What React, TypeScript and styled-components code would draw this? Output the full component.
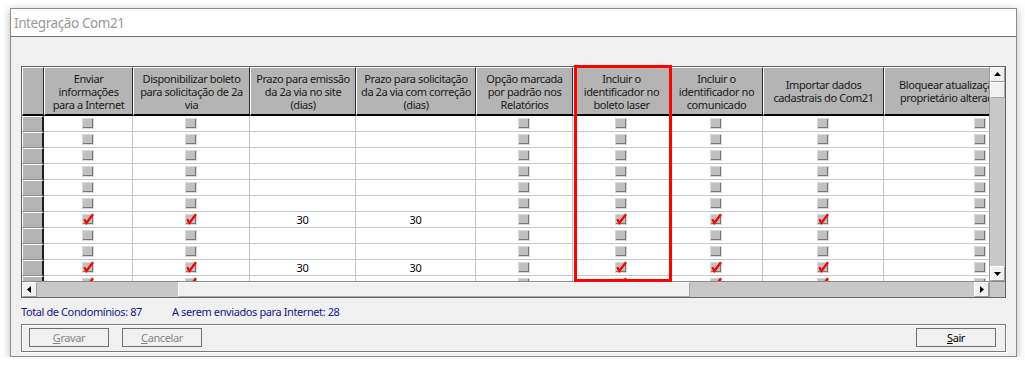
import React from "react";
import styled, {createGlobalStyle} from "styled-components";

type Column = {
  width: number;
  kind: "check" | "number";
  label: string[];
};

const columns: Column[] = [
  {width: 89, kind: "check", label: ["Enviar", "informações", "para a Internet"]},
  {width: 117, kind: "check", label: ["Disponibilizar boleto", "para solicitação de 2a", "via"]},
  {width: 106, kind: "number", label: ["Prazo para emissão", "da 2a via no site", "(dias)"]},
  {width: 120, kind: "number", label: ["Prazo para solicitação", "da 2a via com correção", "(dias)"]},
  {width: 97, kind: "check", label: ["Opção marcada", "por padrão nos", "Relatórios"]},
  {width: 97, kind: "check", label: ["Incluir o", "identificador no", "boleto laser"]},
  {width: 93, kind: "check", label: ["Incluir o", "identificador no", "comunicado"]},
  {width: 121, kind: "check", label: ["Importar dados", "cadastrais do Com21"]},
  {width: 192, kind: "check", label: ["Bloquear atualização de dados do", "proprietário alterado pelo Com21"]},
];

// columns that get a tick on the "sent" rows
const tickedColumns = [0, 1, 5, 6, 7];
const sentRows = [6, 9, 10];
const daysRows = [6, 9];
const rowCount = 12;

const CheckMark = () => (
  <Tick viewBox="0 0 12 12" width="12" height="12">
    <path d="M2.3 6.2 L4.4 10 L11 1.2" fill="none" stroke="#f00" strokeWidth="2.3"/>
  </Tick>
);

const Check: React.FC<{checked?: boolean}> = ({checked = false}) => (
  <CheckBox>
    <CheckInner/>
    {checked && <CheckMark/>}
  </CheckBox>
);

const Arrow: React.FC<{dir: "up" | "down" | "left" | "right"}> = ({dir}) => {
  const points = {
    up: "1,6 8,6 4.5,2",
    down: "1,3 8,3 4.5,7",
    left: "6,1 6,8 2,4.5",
    right: "3,1 3,8 7,4.5",
  }[dir];
  return (
    <ArrowButton>
      <svg width="9" height="9" viewBox="0 0 9 9">
        <polygon points={points} fill="#000"/>
      </svg>
    </ArrowButton>
  );
};

const App = () => {
  const template = `22px ${columns.map((c) => c.width + "px").join(" ")}`;
  return (
    <>
      <GlobalStyle/>
      <Window>
        <TitleBar>Integração Com21</TitleBar>
        <Client>
          <GridFrame>
            <Viewport>
              <Table $template={template}>
                <HeaderCell/>
                {columns.map((col, i) => (
                  <HeaderCell key={i}>
                    {col.label.map((line, j) => (
                      <span key={j}>{line}</span>
                    ))}
                  </HeaderCell>
                ))}
                {Array.from({length: rowCount}).map((_, r) => {
                  const sent = sentRows.includes(r);
                  return (
                    <React.Fragment key={r}>
                      <RowHeader/>
                      {columns.map((col, c) => (
                        <Cell key={c}>
                          {col.kind === "check" ? (
                            <Check checked={sent && tickedColumns.includes(c)}/>
                          ) : (
                            daysRows.includes(r) && "30"
                          )}
                        </Cell>
                      ))}
                    </React.Fragment>
                  );
                })}
              </Table>
            </Viewport>
            <VScroll>
              <Arrow dir="up"/>
              <VTrack>
                <Thumb $length={16} $vertical/>
              </VTrack>
              <Arrow dir="down"/>
            </VScroll>
            <HScroll>
              <Arrow dir="left"/>
              <HTrack $offset={141}>
                <Thumb $length={512}/>
              </HTrack>
              <Arrow dir="right"/>
            </HScroll>
            <ScrollCorner/>
            <Highlight/>
          </GridFrame>
          <Status>
            <span>Total de Condomínios: 87</span>
            <span>A serem enviados para Internet: 28</span>
          </Status>
          <ButtonPanel>
            <Button disabled><u>G</u>ravar</Button>
            <Button disabled><u>C</u>ancelar</Button>
            <Button $push><u>S</u>air</Button>
          </ButtonPanel>
        </Client>
      </Window>
    </>
  );
};

const GlobalStyle = createGlobalStyle`
  html, body {
    margin: 0;
    padding: 0;
    background: #fff;
  }
  body {
    font-family: "Noto Sans", "Segoe UI", sans-serif;
    font-size: 11px;
    letter-spacing: -0.4px;
    color: #000;
  }
`;

const Window = styled.div`
  box-sizing: border-box;
  width: 1007px;
  margin: 8px 0 0 10px;
  border: 1px solid #8c8c8c;
  box-shadow: 0 2px 9px rgba(0, 0, 0, 0.28);
  background: #fff;
`;

const TitleBar = styled.div`
  height: 27px;
  display: flex;
  align-items: center;
  padding-left: 3px;
  font-size: 13.5px;
  letter-spacing: -0.4px;
  color: #999;
  background: #fff;
`;

const Client = styled.div`
  display: flex;
  flex-direction: column;
  border-top: 1px solid #6e6e6e;
  background: #f0f0f0;
  padding: 29px 10px 4px 10px;
`;

const GridFrame = styled.div`
  position: relative;
  display: grid;
  grid-template-columns: 1fr 16px;
  grid-template-rows: 214px 16px;
  border: 1px solid #646464;
  background: #fff;
`;

const Viewport = styled.div`
  overflow: hidden;
`;

const Table = styled.div<{$template: string}>`
  display: grid;
  grid-template-columns: ${({$template}) => $template};
  grid-template-rows: 49px;
  grid-auto-rows: 16px;
  width: max-content;
`;

const HeaderCell = styled.div`
  box-sizing: border-box;
  display: flex;
  flex-direction: column;
  align-items: center;
  justify-content: center;
  background: #b4b4b4;
  border-top: 1px solid #fff;
  border-left: 1px solid #fff;
  border-right: 1px solid #2a2a2a;
  border-bottom: 2px solid #000;
  color: #1a1a1a;
  line-height: 13px;
  white-space: nowrap;
  overflow: hidden;
`;

const RowHeader = styled.div`
  box-sizing: border-box;
  background: #b4b4b4;
  border-top: 1px solid #fff;
  border-left: 1px solid #fff;
  border-right: 2px solid #1e1e1e;
  border-bottom: 1px solid #8a8a8a;
`;

const Cell = styled.div`
  box-sizing: border-box;
  display: flex;
  align-items: center;
  justify-content: center;
  border-right: 1px solid #c4c4c4;
  border-bottom: 1px solid #c4c4c4;
  background: #fff;
  font-size: 11px;
`;

const CheckBox = styled.div`
  position: relative;
  box-sizing: border-box;
  width: 12px;
  height: 11px;
  padding: 1px 0 0 1px;
  background: #d8d8d8;
`;

const CheckInner = styled.div`
  box-sizing: border-box;
  width: 10px;
  height: 9px;
  background: #c0c0c0;
  border-right: 1px solid #767676;
  border-bottom: 1px solid #767676;
`;

const Tick = styled.svg`
  position: absolute;
  left: 0;
  top: -1px;
`;

const ArrowButton = styled.div`
  box-sizing: border-box;
  flex: 0 0 15px;
  display: flex;
  align-items: center;
  justify-content: center;
  background: #f0f0f0;
  border-top: 1px solid #fff;
  border-left: 1px solid #fff;
  border-right: 1px solid #9a9a9a;
  border-bottom: 1px solid #9a9a9a;
`;

const VScroll = styled.div`
  display: flex;
  flex-direction: column;
  background: #c8c8c8;
  border-left: 1px solid #9a9a9a;
`;

const VTrack = styled.div`
  flex: 1;
  display: flex;
  flex-direction: column;
`;

const HScroll = styled.div`
  display: flex;
  background: #c8c8c8;
  border-top: 1px solid #8a8a8a;
`;

const HTrack = styled.div<{$offset: number}>`
  flex: 1;
  display: flex;
  padding-left: ${({$offset}) => $offset}px;
`;

const Thumb = styled.div<{$length: number; $vertical?: boolean}>`
  box-sizing: border-box;
  ${({$length, $vertical}) => ($vertical ? `height: ${$length}px;` : `width: ${$length}px;`)}
  background: #f0f0f0;
  border-top: 1px solid #fff;
  border-left: 1px solid #fff;
  border-right: 1px solid #a8a8a8;
  border-bottom: 1px solid #a8a8a8;
`;

const ScrollCorner = styled.div`
  background: #c8c8c8;
  border-top: 1px solid #8a8a8a;
  border-left: 1px solid #9a9a9a;
`;

const Highlight = styled.div`
  position: absolute;
  left: 552px;
  top: -2px;
  width: 98px;
  height: 217px;
  box-sizing: border-box;
  border: 3px solid #f00;
  pointer-events: none;
`;

const Status = styled.div`
  height: 26px;
  display: grid;
  grid-template-columns: 151px auto;
  align-items: center;
  color: #17178a;
`;

const ButtonPanel = styled.div`
  display: flex;
  gap: 13px;
  padding: 3px 9px 4px 7px;
  border: 1px solid #7a7a7a;
  box-shadow: 1px 1px 0 #fff, inset 1px 1px 0 #fff;
`;

const Button = styled.button<{$push?: boolean}>`
  box-sizing: border-box;
  width: 80px;
  height: 19px;
  padding: 0;
  margin-left: ${({$push}) => ($push ? "auto" : "0")};
  font-family: inherit;
  font-size: 11px;
  letter-spacing: inherit;
  color: #000;
  background: #f0f0f0;
  border: 1px solid #6f6f6f;

  &:disabled {
    color: #858585;
  }
`;

export default App;
